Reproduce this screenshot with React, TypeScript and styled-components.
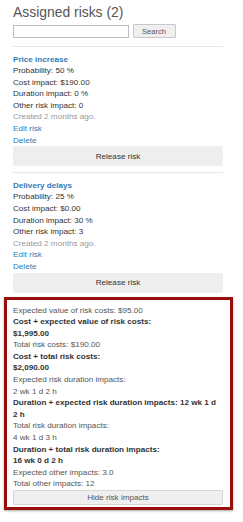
import React from 'react';
import styled, { createGlobalStyle } from 'styled-components';

type Risk = {
  id: number,
  name: string,
  probability: string,
  cost: string,
  duration: string,
  other: string,
  created: string
}

const risks: Risk[] = [
  { id: 1, name: 'Price increase', probability: '50 %', cost: '$190.00', duration: '0 %', other: '0', created: '2 months ago.' },
  { id: 2, name: 'Delivery delays', probability: '25 %', cost: '$0.00', duration: '30 %', other: '3', created: '2 months ago.' },
];

const GlobalStyle = createGlobalStyle`
  html, body {
    margin: 0;
    padding: 0;
    background: #fff;
  }
  body {
    font-family: "Liberation Sans", Arial, sans-serif;
    font-size: 8.12px;
    line-height: 11.6px;
    color: #333;
  }
`

export default function App() {
  return (
    <>
      <GlobalStyle />
      <Page>
        <Title>Assigned risks (2)</Title>
        <SearchRow>
          <SearchInput type="text" />
          <SearchButton>Search</SearchButton>
        </SearchRow>
        {risks.map(risk => (
          <RiskItem key={risk.id}>
            <RiskName href="#">{risk.name}</RiskName>
            <Line>Probability: {risk.probability}</Line>
            <Line>Cost impact: {risk.cost}</Line>
            <Line>Duration impact: {risk.duration}</Line>
            <Line>Other risk impact: {risk.other}</Line>
            <Muted>Created {risk.created}</Muted>
            <ActionLink href="#">Edit risk</ActionLink>
            <ActionLink href="#">Delete</ActionLink>
            <ReleaseButton>Release risk</ReleaseButton>
          </RiskItem>
        ))}
        <ImpactBox>
          <Stat>Expected value of risk costs: $95.00</Stat>
          <Strong>Cost + expected value of risk costs:<br />$1,995.00</Strong>
          <Stat>Total risk costs: $190.00</Stat>
          <Strong>Cost + total risk costs:<br />$2,090.00</Strong>
          <Stat>Expected risk duration impacts:<br />2 wk 1 d 2 h</Stat>
          <Strong>Duration + expected risk duration impacts: 12 wk 1 d 2 h</Strong>
          <Stat>Total risk duration impacts:<br />4 wk 1 d 3 h</Stat>
          <Strong>Duration + total risk duration impacts:<br />16 wk 0 d 2 h</Strong>
          <Stat>Expected other impacts: 3.0</Stat>
          <Stat>Total other impacts: 12</Stat>
          <HideButton>Hide risk impacts</HideButton>
        </ImpactBox>
      </Page>
    </>
  );
}

const Page = styled.div`
  display: flex;
  flex-direction: column;
  width: 210px;
  padding: 5px 20px 10px 13px;
`
const Title = styled.h2`
  margin: 0;
  font-size: 13.9px;
  line-height: 15px;
  font-weight: 400;
  color: #555;
`
const SearchRow = styled.div`
  display: flex;
  align-items: center;
  gap: 3.5px;
  margin-top: 4px;
  padding-bottom: 8px;
  border-bottom: 1px solid #e6e6e6;
`
const SearchInput = styled.input`
  box-sizing: border-box;
  width: 116px;
  height: 13px;
  margin: 0;
  padding: 0 2px;
  border: 1px solid #bdbdbd;
  background: #fff;
`
const SearchButton = styled.button`
  box-sizing: border-box;
  width: 43px;
  height: 14px;
  margin: 0;
  padding: 0;
  border: 1px solid #c8c8c8;
  border-radius: 1px;
  background: #efefef;
  font-family: inherit;
  font-size: 7.5px;
  color: #555;
`
const RiskItem = styled.div`
  display: flex;
  flex-direction: column;
  padding: 6.5px 0 6px;
  border-bottom: 1px solid #e6e6e6;
  &:last-of-type {
    border-bottom: none;
    padding-bottom: 3px;
  }
`
const RiskName = styled.a`
  font-weight: 700;
  color: #337ab7;
  text-decoration: none;
`
const Line = styled.div`
  color: #333;
`
const Muted = styled.div`
  color: #999;
`
const ActionLink = styled.a`
  align-self: flex-start;
  color: #337ab7;
  text-decoration: none;
`
const ReleaseButton = styled.button`
  height: 20px;
  margin: 0;
  padding: 0;
  border: none;
  border-radius: 2px;
  background: #eeeeee;
  font-family: inherit;
  font-size: 8.12px;
  color: #333;
`
const ImpactBox = styled.div`
  display: flex;
  flex-direction: column;
  margin: -3px -10px 0 -9px;
  padding: 5px 7px 2.5px 6px;
  border: 3px solid #990d0d;
  box-shadow: 0 1px 2px rgba(0, 0, 0, 0.35);
`
const Stat = styled.div`
  color: #555;
  padding-right: 2px;
`
const Strong = styled.div`
  font-weight: 700;
  color: #333;
  padding-right: 2px;
`
const HideButton = styled.button`
  height: 14.5px;
  margin: 0;
  padding: 0;
  border: 1px solid #d6d6d6;
  border-radius: 1px;
  background: #efefef;
  font-family: inherit;
  font-size: 8.12px;
  color: #555;
`
